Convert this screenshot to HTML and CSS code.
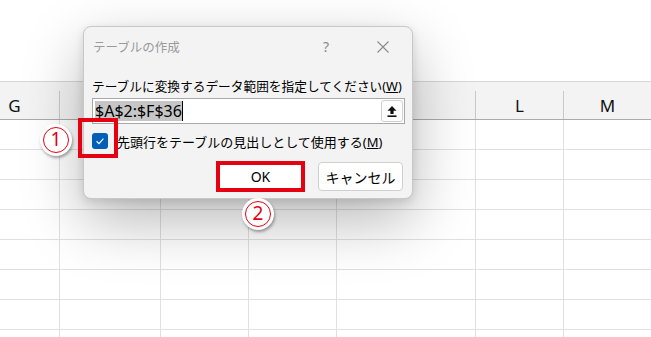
FILE: index.html
```html
<!DOCTYPE html>
<html lang="ja">
  <head>
    <meta charset="UTF-8" />
    <title>テーブルの作成</title>
    <link rel="stylesheet" href="styles.css">
  </head>
  <body>
    <div class="sheet">
      <div class="col-head">
        <div class="hcell">G</div>
        <div class="hcell"></div>
        <div class="hcell"></div>
        <div class="hcell"></div>
        <div class="hcell"></div>
        <div class="hcell">L</div>
        <div class="hcell">M</div>
      </div>
      <div class="grid">
        <div class="cell"></div><div class="cell"></div><div class="cell"></div><div class="cell"></div><div class="cell"></div><div class="cell"></div><div class="cell"></div>
        <div class="cell"></div><div class="cell"></div><div class="cell"></div><div class="cell"></div><div class="cell"></div><div class="cell"></div><div class="cell"></div>
        <div class="cell"></div><div class="cell"></div><div class="cell"></div><div class="cell"></div><div class="cell"></div><div class="cell"></div><div class="cell"></div>
        <div class="cell"></div><div class="cell"></div><div class="cell"></div><div class="cell"></div><div class="cell"></div><div class="cell"></div><div class="cell"></div>
        <div class="cell"></div><div class="cell"></div><div class="cell"></div><div class="cell"></div><div class="cell"></div><div class="cell"></div><div class="cell"></div>
        <div class="cell"></div><div class="cell"></div><div class="cell"></div><div class="cell"></div><div class="cell"></div><div class="cell"></div><div class="cell"></div>
        <div class="cell"></div><div class="cell"></div><div class="cell"></div><div class="cell"></div><div class="cell"></div><div class="cell"></div><div class="cell"></div>
        <div class="cell"></div><div class="cell"></div><div class="cell"></div><div class="cell"></div><div class="cell"></div><div class="cell"></div><div class="cell"></div>
      </div>
    </div>

    <div class="dialog">
      <div class="dlg-title">
        <span class="title">テーブルの作成</span>
        <span class="help">?</span>
        <span class="close">
          <svg width="12" height="12" viewBox="0 0 12 12">
            <path d="M0.5 0.5 L11.5 11.5 M11.5 0.5 L0.5 11.5" stroke="#8a8a8a" stroke-width="1.1" fill="none" />
          </svg>
        </span>
      </div>
      <div class="dlg-body">
        <div class="prompt">テーブルに変換するデータ範囲を指定してください(<u>W</u>)</div>
        <div class="range-field">
          <span class="range-text"><span class="sel">$A$2:$F$36</span><span class="caret"></span></span>
          <span class="collapse">
            <svg width="10" height="11" viewBox="0 0 10 11">
              <path d="M5 0 L9.5 4.8 L6.6 4.8 L6.6 8 L3.4 8 L3.4 4.8 L0.5 4.8 Z" fill="#111" />
              <rect x="0.5" y="9.4" width="9" height="1.6" fill="#111" />
            </svg>
          </span>
        </div>
        <div class="check-row">
          <span class="check">
            <svg width="16" height="16" viewBox="0 0 16 16">
              <path d="M4.6 8.3 L7 10.6 L11.4 5.6" stroke="#fff" stroke-width="1.2" fill="none" />
            </svg>
          </span>
          <span>先頭行をテーブルの見出しとして使用する(<u>M</u>)</span>
        </div>
        <div class="actions">
          <span class="btn ok">OK</span>
          <span class="btn">キャンセル</span>
        </div>
      </div>
      <div class="mark-box"></div>
    </div>

    <div class="step step-1"><span>1</span></div>
    <div class="step step-2"><span>2</span></div>
  </body>
</html>
```

FILE: styles.css
```css
body {
  margin: 0;
  padding: 0;
  font-family: "Noto Sans", "Noto Sans CJK JP", sans-serif;
  background: #ffffff;
  color: #000000;
  overflow: hidden;
}
.sheet {
  height: 337px;
  overflow: hidden;
  margin-left: -30px;
  padding-top: 81px;
  box-sizing: border-box;
}
.col-head {
  display: grid;
  grid-template-columns: 90px 101px 88px 88px 139px 88px 88px;
  padding-top: 9px;
  background: #f3f3f3;
  border-top: 1px solid #d6d6d6;
  border-bottom: 1px solid #ababab;
}
.hcell {
  height: 28px;
  box-sizing: border-box;
  border-right: 1px solid #c9c9c9;
  display: flex;
  align-items: center;
  justify-content: center;
  font-size: 17px;
  color: #111;
}
.grid {
  display: grid;
  grid-template-columns: 90px 101px 88px 88px 139px 88px 88px;
  grid-auto-rows: 30px;
}
.cell {
  box-sizing: border-box;
  border-right: 1px solid #e0e0e0;
  border-bottom: 1px solid #e0e0e0;
}

.dialog {
  position: absolute;
  left: 83px;
  top: 26px;
  width: 330px;
  height: 173px;
  box-sizing: border-box;
  background: #f3f3f3;
  border: 1px solid #c8c8c8;
  border-radius: 8px;
  box-shadow: 0 22px 60px rgba(0, 0, 0, 0.28), 0 3px 10px rgba(0, 0, 0, 0.12);
}
.dlg-title {
  height: 39px;
  display: flex;
  align-items: center;
  padding-left: 9px;
}
.title {
  font-size: 12.5px;
  color: #9a9a9a;
  flex: 1;
}
.help {
  width: 40px;
  text-align: center;
  font-size: 14px;
  color: #8a8a8a;
}
.close {
  width: 46px;
  margin-left: 14px;
  margin-right: 6px;
  display: flex;
  justify-content: center;
}
.dlg-body {
  padding: 10px 7px 0 8px;
}
.prompt {
  font-size: 12.7px;
  line-height: 20px;
  white-space: nowrap;
}
.range-field {
  margin-top: 2px;
  height: 26px;
  box-sizing: border-box;
  background: #ffffff;
  border: 1px solid #a8a8a8;
  display: flex;
  align-items: center;
  justify-content: space-between;
  padding: 0 1px 0 2px;
}
.range-text {
  display: flex;
  align-items: center;
  font-size: 16px;
}
.sel {
  background: #c6c6c6;
  line-height: 20px;
}
.caret {
  width: 1px;
  height: 20px;
  background: #000;
}
.collapse {
  width: 22px;
  height: 22px;
  box-sizing: border-box;
  border: 1px solid #d0d0d0;
  border-radius: 3px;
  background: #fdfdfd;
  display: flex;
  align-items: center;
  justify-content: center;
}
.check-row {
  margin-top: 9px;
  height: 16px;
  display: flex;
  align-items: center;
  gap: 9px;
  font-size: 13px;
  white-space: nowrap;
}
.check {
  width: 16px;
  height: 16px;
  border-radius: 3px;
  background: #005fb8;
  display: flex;
}
.actions {
  margin-top: 12px;
  display: flex;
  justify-content: flex-end;
  align-items: center;
  gap: 13px;
  padding-right: 2px;
}
.btn {
  width: 85px;
  height: 29px;
  box-sizing: border-box;
  background: #ffffff;
  border: 1px solid #d0d0d0;
  border-radius: 4px;
  display: flex;
  align-items: center;
  justify-content: center;
  font-size: 14px;
}
.btn.ok {
  width: 89px;
  height: 31px;
  border: 4px solid #e50012;
  border-radius: 0;
}
.mark-box {
  position: absolute;
  left: -6px;
  top: 91px;
  width: 40px;
  height: 40px;
  box-sizing: border-box;
  border: 4px solid #e50012;
}

.step {
  position: absolute;
  width: 32px;
  height: 32px;
  border-radius: 50%;
  background: #ffffff;
  box-shadow: 1px 2px 3px rgba(0, 0, 0, 0.35);
  display: flex;
  align-items: center;
  justify-content: center;
}
.step span {
  width: 26px;
  height: 26px;
  box-sizing: border-box;
  border: 1.5px solid #e50012;
  border-radius: 50%;
  color: #e50012;
  font-size: 19px;
  line-height: 23px;
  text-align: center;
}
.step-1 {
  left: 40px;
  top: 124px;
}
.step-2 {
  left: 242px;
  top: 198px;
}
```
